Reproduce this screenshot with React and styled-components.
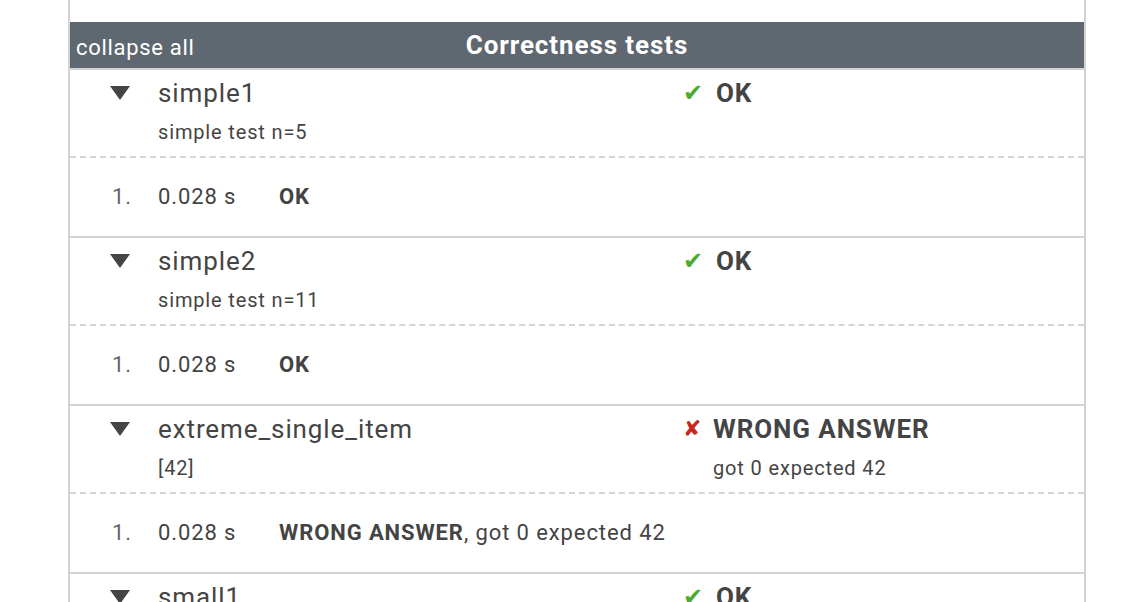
import React from 'react';
import styled, { createGlobalStyle } from 'styled-components';

const GlobalStyle = createGlobalStyle`
  body {
    margin: 0;
    background: #fff;
    font-family: Roboto, "Liberation Sans", sans-serif;
    color: #444;
  }
`;

const Panel = styled.div`
  margin-left: 68px;
  width: 1018px;
  border-left: 2px solid #d3d3d3;
  border-right: 2px solid #d3d3d3;
  box-sizing: border-box;
`;

const Spacer = styled.div`
  height: 22px;
`;

const Header = styled.div`
  display: grid;
  grid-template-columns: 1fr auto 1fr;
  align-items: center;
  height: 46px;
  background: #5f6770;
  color: #fff;
  border-bottom: 2px solid #d3d3d3;
`;

const CollapseAll = styled.span`
  font-size: 22px;
  letter-spacing: 0.7px;
  padding-left: 6px;
  margin-top: 4px;
  cursor: pointer;
`;

const Title = styled.span`
  font-size: 26px;
  letter-spacing: 0.9px;
  font-weight: 700;
`;

const Row = styled.div`
  display: grid;
  grid-template-columns: 88px 525px 1fr;
  box-sizing: border-box;
  border-bottom: 2px ${(p) => (p.dashed ? 'dashed #d5d5d5' : 'solid #d3d3d3')};
`;

const TestRow = styled(Row)`
  height: 88px;
  padding-top: 9px;
`;

const SubRow = styled(Row)`
  height: 80px;
  align-items: center;
  padding-bottom: 2px;
`;

const Toggle = styled.div`
  height: 28px;
  display: flex;
  align-items: center;
  justify-content: flex-end;
  padding-right: 28px;
  &::before {
    content: '';
    width: 0;
    height: 0;
    border-left: 10px solid transparent;
    border-right: 10px solid transparent;
    border-top: 14px solid #444;
  }
`;

const Name = styled.div`
  font-size: 26px;
  letter-spacing: 0.9px;
  line-height: 28px;
  color: #444;
`;

const Desc = styled.div`
  font-size: 20px;
  letter-spacing: 0.85px;
  line-height: 24px;
  margin-top: 13px;
  padding-left: ${(p) => p.indent || 0}px;
  color: #444;
`;

const Status = styled.div`
  display: flex;
  align-items: center;
  font-size: 26px;
  letter-spacing: 0.9px;
  line-height: 28px;
  font-weight: 700;
  color: #444;
`;

const Mark = styled.span`
  font-family: "DejaVu Sans", sans-serif;
  font-weight: 400;
  letter-spacing: 0;
  font-size: ${(p) => (p.ok ? '24px' : '22px')};
  color: ${(p) => (p.ok ? '#4aad2c' : '#c8271c')};
  width: ${(p) => (p.ok ? '33px' : '30px')};
`;

const Num = styled.div`
  font-size: 22px;
  letter-spacing: 0.9px;
  color: #666;
  text-align: right;
  padding-right: 26px;
`;

const RunInfo = styled.div`
  display: flex;
  font-size: 22px;
  letter-spacing: 0.9px;
  color: #444;
`;

const Time = styled.span`
  width: 121px;
`;

const Verdict = styled.b`
  font-weight: 700;
`;

const tests = [
  { name: 'simple1', desc: 'simple test n=5', ok: true },
  { name: 'simple2', desc: 'simple test n=11', ok: true },
  { name: 'extreme_single_item', desc: '[42]', ok: false, msg: 'got 0 expected 42' },
  { name: 'small1', desc: '', ok: true },
];

function Test({ t }) {
  return (
    <>
      <TestRow dashed>
        <Toggle />
        <div>
          <Name>{t.name}</Name>
          {t.desc && <Desc>{t.desc}</Desc>}
        </div>
        <div>
          <Status>
            <Mark ok={t.ok}>{t.ok ? '✔' : '✘'}</Mark>
            {t.ok ? 'OK' : 'WRONG ANSWER'}
          </Status>
          {t.msg && <Desc indent={30}>{t.msg}</Desc>}
        </div>
      </TestRow>
      <SubRow>
        <Num>1.</Num>
        <RunInfo>
          <Time>0.028 s</Time>
          <span>
            <Verdict>{t.ok ? 'OK' : 'WRONG ANSWER'}</Verdict>
            {t.msg ? `, ${t.msg}` : ''}
          </span>
        </RunInfo>
        <div />
      </SubRow>
    </>
  );
}

export default function App() {
  return (
    <>
      <GlobalStyle />
      <Panel>
        <Spacer />
        <Header>
          <CollapseAll>collapse all</CollapseAll>
          <Title>Correctness tests</Title>
          <span />
        </Header>
        {tests.map((t) => (
          <Test key={t.name} t={t} />
        ))}
      </Panel>
    </>
  );
}
